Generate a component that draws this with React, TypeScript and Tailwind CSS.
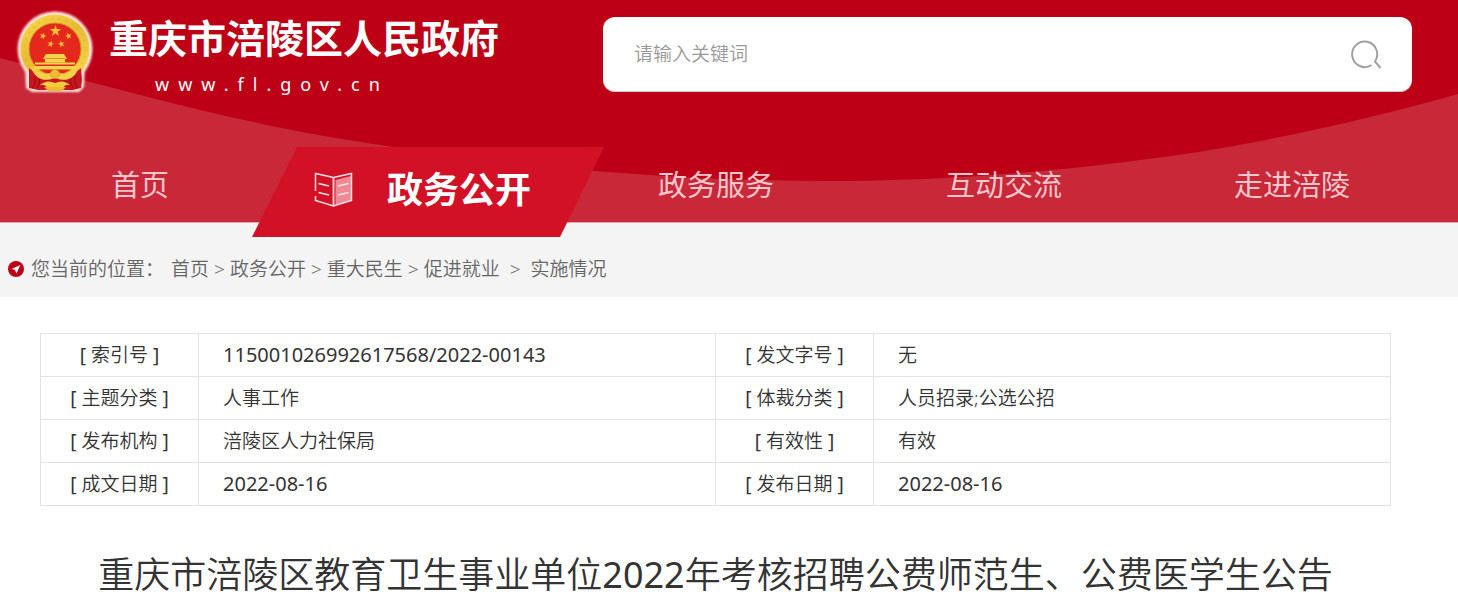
import React from "react";

const navItems = ["首页", "政务公开", "政务服务", "互动交流", "走进涪陵"];
const activeItem = "政务公开";

const crumbs = ["首页", "政务公开", "重大民生", "促进就业"];

const records = [
  ["索引号", "115001026992617568/2022-00143", "发文字号", "无"],
  ["主题分类", "人事工作", "体裁分类", "人员招录;公选公招"],
  ["发布机构", "涪陵区人力社保局", "有效性", "有效"],
  ["成文日期", "2022-08-16", "发布日期", "2022-08-16"],
];

const STAR = "M0 -6 L1.4 -1.9 L5.7 -1.9 L2.2 0.7 L3.5 4.9 L0 2.3 L-3.5 4.9 L-2.2 0.7 L-5.7 -1.9 L-1.4 -1.9 Z";

function Emblem() {
  return (
    <svg className="h-[88px] w-20 shrink-0" viewBox="0 0 80 88" aria-hidden="true">
      <defs>
        <filter id="halo" x="-20%" y="-20%" width="140%" height="140%">
          <feGaussianBlur stdDeviation="1.3" />
        </filter>
        <linearGradient id="gold" x1="0" y1="0" x2="0.6" y2="1">
          <stop offset="0" stopColor="#f9dc4c" />
          <stop offset="0.5" stopColor="#e9bb35" />
          <stop offset="1" stopColor="#f5d54a" />
        </linearGradient>
      </defs>
      <g fill="#ffe4dc" filter="url(#halo)">
        <circle cx="40" cy="41" r="37.500" />
        <path d="M10 58 L70 58 L69 79 L64 84 L17 84 L11 80 Z" />
      </g>
      <circle cx="40" cy="41" r="34.500" fill="url(#gold)" />
      <circle cx="40" cy="41" r="30.500" fill="none" stroke="#c58a1d" strokeWidth="2" strokeDasharray="2 5" opacity="0.2" />
      <circle cx="40" cy="41" r="26" fill="#e5281c" stroke="#cf941d" strokeWidth="1" />
      <g fill="#efc23a">
        <path d={STAR} transform="translate(40.500 23)" />
        <path d={STAR} transform="translate(28 28) rotate(20) scale(.6)" />
        <path d={STAR} transform="translate(53.500 28) rotate(-20) scale(.6)" />
        <path d={STAR} transform="translate(35.500 36) rotate(15) scale(.6)" />
        <path d={STAR} transform="translate(46.500 36) rotate(-15) scale(.6)" />
      </g>
      <g fill="#f6d44c">
        <path d="M31 46 h18 l3 5 h-2 v3.500 h-20 v-3.500 h-2 Z" />
        <path d="M20 54.500 h40 v2 h-40 Z" />
        <path d="M20 58 h40 l2 3.500 h-44 Z" />
      </g>
      <path d="M30 50.500 h20" stroke="#dc9525" strokeWidth="1" />
      <path d="M14 60 C19 64 25 69 31 70 L49 70 C56 69 61 64 66 60 L67 72 L66 80 L58 82 L23 82 L14 80 L14 72 Z" fill="#c9151e" />
      <path d="M19 68 Q22 74 17 80 M24 70 Q26 75 22 80 M61 68 Q58 74 63 80 M56 70 Q54 75 58 80" stroke="#8f0c15" strokeWidth="1" fill="none" />
      <path d="M16 59 C25 69 34 66 40 63 C46 66 55 69 64 59 C60 72 50 74 40 70 C30 74 20 72 16 59 Z" fill="#f5d04a" />
      <circle cx="40" cy="66" r="4.500" fill="#edbd35" stroke="#d19420" strokeWidth="1" strokeDasharray="2 1" />
      <path d="M25 77 Q32 71 40 75 Q48 71 55 77 L51 77 Q46 82 40 79 Q34 82 29 77 Z" fill="#f3cb40" />
      <path d="M29 79 L51 79 L47 83 L33 83 Z" fill="#edba32" />
    </svg>
  );
}

function BookIcon() {
  return (
    <svg className="h-9 w-[39px] shrink-0" viewBox="0 0 39 36" fill="none" stroke="#fbe3e6" strokeWidth="1.500" aria-hidden="true">
      <path d="M21.500 8 L37 4 V28.500 L21.500 33 Z" fill="#ee8a96" stroke="none" />
      <path d="M1.500 19 V1.500 L19.500 5.500 L37.500 1.500 V28.500 L19.500 34 L1.500 28.500 V24" />
      <path d="M19.500 5.500 V34" strokeWidth="1.800" />
      <path d="M4.500 11.500 L15 14 M4.500 20.500 L15 23 M24 14 L34.500 11.500 M24 23 L34.500 20.500" strokeWidth="1.600" />
    </svg>
  );
}

export default function App() {
  return (
    <div className="min-h-screen overflow-x-hidden bg-white font-['Noto_Sans','Noto_Sans_CJK_SC',sans-serif] text-[#333]">
      <header className="relative border-b border-[#e5a3aa] bg-[#bd0016]">
        <svg className="absolute inset-0 h-full w-full" viewBox="0 0 1458 222" preserveAspectRatio="none" aria-hidden="true">
          <path
            d="M0 58 C110 87 220 118 330 137 C497 165 663 181 830 181 C928 181 1027 174 1125 162 C1236 149 1347 125 1458 94 V222 H0 Z"
            fill="#c82838"
          />
        </svg>
        <div className="relative flex items-start pr-[46px]">
          <div className="flex w-[603px] shrink-0 items-start pl-[15px] pt-2">
            <Emblem />
            <div className="flex flex-col pl-3.5 text-white">
              <span className="text-[39px] leading-[60px] font-bold whitespace-nowrap">重庆市涪陵区人民政府</span>
              <span className="pl-[46px] text-lg leading-8 tracking-[9px]">www.fl.gov.cn</span>
            </div>
          </div>
          <form
            className="mt-[17px] flex h-[75px] flex-1 items-center rounded-xl border-b border-[#ccc] bg-white pr-[29px] pl-[31px]"
            onSubmit={(e) => e.preventDefault()}
          >
            <input
              type="text"
              aria-label="请输入关键词"
              placeholder="请输入关键词"
              className="min-w-0 flex-1 bg-transparent text-[19px] font-[350] outline-none placeholder:text-[#999]"
            />
            <button type="submit" aria-label="搜索">
              <svg className="h-8 w-8" viewBox="0 0 32 32" fill="none" stroke="#a0a0a0" strokeWidth="2" aria-hidden="true">
                <path d="M20.500 27 A12.500 12.800 0 1 1 24 23.500 L29.500 30" />
              </svg>
            </button>
          </form>
        </div>
        <nav className="relative mt-10 mr-[22px] -ml-1 grid h-[82px] grid-cols-5">
          {navItems.map((item) =>
            item === activeItem ? (
              <div key={item} className="relative">
                <a
                  href="#"
                  aria-current="page"
                  className="absolute top-[7px] left-1/2 z-10 flex h-[90px] w-[352px] -translate-x-1/2 items-center pb-1 pl-[62px] text-4xl font-bold whitespace-nowrap text-white"
                >
                  <svg className="absolute bottom-0 left-0 h-[90px] w-full" viewBox="0 0 352 90" aria-hidden="true">
                    <path d="M45 0 H352 L308 90 H0 Z" fill="#d21126" />
                  </svg>
                  <span className="relative flex items-center gap-[34px]">
                    <BookIcon />
                    {item}
                  </span>
                </a>
              </div>
            ) : (
              <a key={item} href="#" className="flex items-center justify-center pt-2 text-[29px] text-[#f6c6cd]">
                {item}
              </a>
            )
          )}
        </nav>
      </header>

      <div className="flex h-[74px] items-center bg-[#f4f4f4] pt-[18px] pl-2 text-[19px] font-[350] whitespace-nowrap text-[#666]">
        <svg className="mr-[7px] h-4 w-4 shrink-0" viewBox="0 0 16 16" aria-hidden="true">
          <circle cx="8" cy="8" r="8" fill="#bd0016" />
          <path d="M12.300 4 L3.500 8 L7 9 L8.500 12.500 Z" fill="#fff" />
        </svg>
        <span>您当前的位置：</span>
        <nav aria-label="您当前的位置" className="flex items-center gap-[5px] pl-[7px]">
          {crumbs.map((crumb, i) => (
            <React.Fragment key={crumb}>
              {i > 0 && <span>&gt;</span>}
              <a href="#">{crumb}</a>
            </React.Fragment>
          ))}
          <span className="px-[5px]">&gt;</span>
          <a href="#">实施情况</a>
        </nav>
      </div>

      <main className="pt-9 pr-[67px] pb-1 pl-10">
        <table className="w-full table-fixed border-collapse text-[19px] font-[350]">
          <colgroup>
            <col className="w-[158px]" />
            <col />
            <col className="w-[158px]" />
            <col />
          </colgroup>
          <tbody>
            {records.map((row) => (
              <tr key={row[0]} className="h-[43px]">
                {row.map((cell, i) =>
                  i % 2 === 0 ? (
                    <th key={i} scope="row" className="border border-[#e3e3e3] p-0 text-center font-normal">
                      [ <span className="font-[350]">{cell}</span> ]
                    </th>
                  ) : (
                    <td
                      key={i}
                      className={
                        /^\d/.test(cell)
                          ? "border border-[#e3e3e3] py-0 pl-6 text-xl font-normal"
                          : "border border-[#e3e3e3] py-0 pl-6"
                      }
                    >
                      {cell}
                    </td>
                  )
                )}
              </tr>
            ))}
          </tbody>
        </table>
        <h1 className="mt-[41px] text-center text-4xl leading-[56px] font-[350]">
          重庆市涪陵区教育卫生事业单位<span className="font-normal">2022</span>年考核招聘公费师范生、公费医学生公告
        </h1>
      </main>
    </div>
  );
}
